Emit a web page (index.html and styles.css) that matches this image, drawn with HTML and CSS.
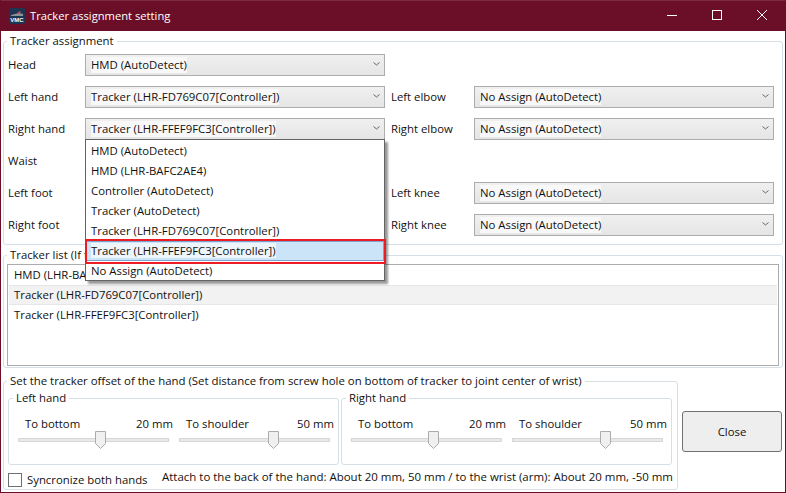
FILE: index.html
```html
<!DOCTYPE html>
<html lang="en">
<head>
<meta charset="utf-8">
<title>Tracker assignment setting</title>
<link rel="stylesheet" href="styles.css">
</head>
<body>
<div class="window">
  <header class="titlebar">
    <svg class="app-icon" width="16" height="16" viewBox="0 0 16 16"><rect width="16" height="16" rx="2" fill="#1d3550"/><path d="M2 7l8-2 4 1v2H2z" fill="#8d8f96"/><path d="M8 5l3-2 1 1-3 2z" fill="#c9485b"/><text x="8" y="14" class="app-icon-text">VMC</text></svg>
    <span class="title">Tracker assignment setting</span>
    <div class="win-buttons">
      <svg width="10" height="10" viewBox="0 0 10 10"><path d="M0 5.5h10" stroke="#fff" fill="none"/></svg>
      <svg width="10" height="10" viewBox="0 0 10 10"><rect x=".5" y=".5" width="9" height="9" stroke="#fff" fill="none"/></svg>
      <svg width="10" height="10" viewBox="0 0 10 10"><path d="M0 0l10 10M10 0L0 10" stroke="#fff" fill="none"/></svg>
    </div>
  </header>

  <fieldset class="group assign">
    <legend>Tracker assignment</legend>
    <div class="assign-grid">
      <span class="lbl">Head</span>
      <div class="combo"><span class="combo-text">HMD (AutoDetect)</span><svg class="chev" width="7" height="4" viewBox="0 0 7 4"><path d="M.5.5l3 2.5 3-2.5" stroke="#666" fill="none"/></svg></div>
      <span></span><span></span>

      <span class="lbl">Left hand</span>
      <div class="combo"><span class="combo-text">Tracker (LHR-FD769C07[Controller])</span><svg class="chev" width="7" height="4" viewBox="0 0 7 4"><path d="M.5.5l3 2.5 3-2.5" stroke="#666" fill="none"/></svg></div>
      <span class="lbl">Left elbow</span>
      <div class="combo"><span class="combo-text">No Assign (AutoDetect)</span><svg class="chev" width="7" height="4" viewBox="0 0 7 4"><path d="M.5.5l3 2.5 3-2.5" stroke="#666" fill="none"/></svg></div>

      <span class="lbl">Right hand</span>
      <div class="combo"><span class="combo-text">Tracker (LHR-FFEF9FC3[Controller])</span><svg class="chev" width="7" height="4" viewBox="0 0 7 4"><path d="M.5.5l3 2.5 3-2.5" stroke="#666" fill="none"/></svg></div>
      <span class="lbl">Right elbow</span>
      <div class="combo"><span class="combo-text">No Assign (AutoDetect)</span><svg class="chev" width="7" height="4" viewBox="0 0 7 4"><path d="M.5.5l3 2.5 3-2.5" stroke="#666" fill="none"/></svg></div>

      <span class="lbl">Waist</span>
      <div class="combo"></div>
      <span></span><span></span>

      <span class="lbl">Left foot</span>
      <div class="combo"></div>
      <span class="lbl">Left knee</span>
      <div class="combo"><span class="combo-text">No Assign (AutoDetect)</span><svg class="chev" width="7" height="4" viewBox="0 0 7 4"><path d="M.5.5l3 2.5 3-2.5" stroke="#666" fill="none"/></svg></div>

      <span class="lbl">Right foot</span>
      <div class="combo"></div>
      <span class="lbl">Right knee</span>
      <div class="combo"><span class="combo-text">No Assign (AutoDetect)</span><svg class="chev" width="7" height="4" viewBox="0 0 7 4"><path d="M.5.5l3 2.5 3-2.5" stroke="#666" fill="none"/></svg></div>
    </div>
  </fieldset>

  <fieldset class="group trackers">
    <legend>Tracker list (If tracker not found)</legend>
    <ul class="list">
      <li>HMD (LHR-BAFC2AE4)</li>
      <li class="selected">Tracker (LHR-FD769C07[Controller])</li>
      <li>Tracker (LHR-FFEF9FC3[Controller])</li>
    </ul>
  </fieldset>

  <div class="bottom">
    <fieldset class="group offset">
      <legend>Set the tracker offset of the hand (Set distance from screw hole on bottom of tracker to joint center of wrist)</legend>
      <div class="hands">
        <fieldset class="group hand">
          <legend>Left hand</legend>
          <div class="sliders">
            <div class="slider">
              <div class="slider-labels"><span>To bottom</span><span>20 mm</span></div>
              <div class="track"><svg class="thumb" style="left:76px" width="11" height="18" viewBox="0 0 11 18"><path d="M.5.5h10v12l-5 5-5-5z" fill="#f0f0f0" stroke="#acacac"/></svg></div>
            </div>
            <div class="slider">
              <div class="slider-labels"><span>To shoulder</span><span>50 mm</span></div>
              <div class="track"><svg class="thumb" style="left:88px" width="11" height="18" viewBox="0 0 11 18"><path d="M.5.5h10v12l-5 5-5-5z" fill="#f0f0f0" stroke="#acacac"/></svg></div>
            </div>
          </div>
        </fieldset>
        <fieldset class="group hand">
          <legend>Right hand</legend>
          <div class="sliders">
            <div class="slider">
              <div class="slider-labels"><span>To bottom</span><span>20 mm</span></div>
              <div class="track"><svg class="thumb" style="left:76px" width="11" height="18" viewBox="0 0 11 18"><path d="M.5.5h10v12l-5 5-5-5z" fill="#f0f0f0" stroke="#acacac"/></svg></div>
            </div>
            <div class="slider">
              <div class="slider-labels"><span>To shoulder</span><span>50 mm</span></div>
              <div class="track"><svg class="thumb" style="left:87px" width="11" height="18" viewBox="0 0 11 18"><path d="M.5.5h10v12l-5 5-5-5z" fill="#f0f0f0" stroke="#acacac"/></svg></div>
            </div>
          </div>
        </fieldset>
      </div>
      <div class="foot">
        <label class="check"><span class="box"></span>Syncronize both hands</label>
        <span class="hint">Attach to the back of the hand: About 20 mm, 50 mm / to the wrist (arm): About 20 mm, -50 mm</span>
      </div>
    </fieldset>
    <button class="close">Close</button>
  </div>

  <div class="popup">
    <div class="opt">HMD (AutoDetect)</div>
    <div class="opt">HMD (LHR-BAFC2AE4)</div>
    <div class="opt">Controller (AutoDetect)</div>
    <div class="opt">Tracker (AutoDetect)</div>
    <div class="opt">Tracker (LHR-FD769C07[Controller])</div>
    <div class="opt current"><span class="opt-text">Tracker (LHR-FFEF9FC3[Controller])</span></div>
    <div class="opt">No Assign (AutoDetect)</div>
  </div>
</div>
</body>
</html>
```
FILE: styles.css
```css
* { box-sizing: border-box; }
html, body { margin: 0; padding: 0; }
body {
  font-family: "Open Sans", "Noto Sans", sans-serif;
  font-size: 11.35px;
  line-height: 16px;
  color: #111;
  background: #fff;
}
.window {
  position: relative;
  width: 786px;
  height: 493px;
  overflow: hidden;
  border: 1px solid #6a0f27;
  border-top: 0;
  background: #fff;
  padding-left: 2px;
}
.titlebar {
  display: flex;
  align-items: center;
  height: 31px;
  margin-left: -3px;
  margin-right: -1px;
  padding-left: 9px;
  background: #6a0f27;
  border-top: 1px solid #7b2a40;
  color: #fff;
}
.app-icon { flex: none; margin-top: 0; }
.app-icon-text { font-size: 6px; font-weight: 700; fill: #fff; text-anchor: middle; font-family: "Liberation Sans", sans-serif; }
.title { margin-left: 5px; font-size: 11.2px; }
.win-buttons {
  margin-left: auto;
  margin-bottom: 2px;
  display: flex;
  gap: 35px;
  padding-right: 19px;
}
.group {
  margin: 0;
  padding: 0;
  min-width: 0;
  border: 1px solid #d5dfe5;
  border-radius: 3px;
}
.group legend {
  padding: 0 3px;
  margin-left: -1px;
  line-height: 18px;
  height: 18px;
}
.assign {
  margin-top: 1px;
  width: 780px;
  height: 213px;
  padding: 4px 0 0 4px;
}
.assign-grid {
  display: grid;
  grid-template-columns: 77px 300px 89px 300px;
  grid-auto-rows: 22px;
  row-gap: 10px;
  column-gap: 0;
}
.lbl { line-height: 22px; }
.assign-grid .lbl:nth-child(4n+3) { padding-left: 6px; }
.combo {
  display: flex;
  align-items: center;
  justify-content: space-between;
  height: 22px;
  padding: 0 4px 0 5px;
  border: 1px solid #acacac;
  background: linear-gradient(#f0f0f0, #e5e5e5);
}
.combo-text { background: #f8f8f8; line-height: 16px; }
.chev { flex: none; margin-right: 0; margin-top: -3px; }
.trackers {
  margin-top: 1px;
  width: 780px;
  height: 122px;
  padding: 0 0 0 3px;
}
.trackers legend { margin-left: 0; }
.list {
  list-style: none;
  margin: 0;
  padding: 0 1px;
  width: 772px;
  height: 102px;
  border: 1px solid #acacac;
}
.list li {
  height: 20px;
  line-height: 18px;
  padding-left: 5px;
  border-top: 1px solid transparent;
  border-bottom: 1px solid transparent;
}
.list .selected {
  background: #f2f2f2;
  border-color: #e6e6e6;
}
.bottom {
  display: flex;
  align-items: flex-start;
  margin-top: 4px;
}
.offset {
  width: 675px;
  height: 118px;
  padding: 0 0 0 4px;
}
.offset > legend { font-size: 11.42px; }
.hands {
  display: flex;
  gap: 2px;
  margin-top: -1px;
}
.hand {
  width: 331px;
  height: 76px;
  padding: 0 0 0 9px;
}
.hand legend { margin-left: -5px; }
.sliders {
  display: flex;
  gap: 10px;
  padding-top: 9px;
}
.slider { width: 151px; }
.slider-labels {
  display: flex;
  justify-content: space-between;
  padding-left: 7px;
  margin-right: -4px;
}
.track {
  position: relative;
  height: 4px;
  margin-top: 6px;
  background: #e7eaea;
  border: 1px solid #d6d6d6;
}
.thumb {
  position: absolute;
  top: -8px;
}
.foot {
  display: flex;
  align-items: flex-start;
  padding-top: 4px;
}
.check {
  display: flex;
  align-items: center;
  gap: 5px;
  width: 154px;
  padding-top: 3px;
}
.hint { font-size: 11.47px; }
.box {
  width: 14px;
  height: 14px;
  border: 1px solid #707070;
  background: #fff;
  flex: none;
}
.close {
  width: 100px;
  height: 41px;
  margin: 39px 0 0 4px;
  border: 1px solid #707070;
  border-radius: 3px;
  background: #eeeeee;
  color: #111;
  font: inherit;
}
.popup {
  position: absolute;
  left: 84px;
  top: 139px;
  width: 300px;
  height: 142px;
  padding-top: 1px;
  background: #fff;
  border: 1px solid #646464;
  box-shadow: 3px 3px 2px rgba(0, 0, 0, 0.4);
}
.opt {
  position: relative;
  height: 20px;
  line-height: 20px;
  padding-left: 5px;
}
.current {
  background: #cce4f7;
  box-shadow: inset 0 0 0 1px #7da2ce;
}
.current::after {
  content: "";
  position: absolute;
  inset: -2px -2px -3px -1px;
  border: 2px solid #ed1c24;
}
.opt-text { background: #eef6fc; }
```
